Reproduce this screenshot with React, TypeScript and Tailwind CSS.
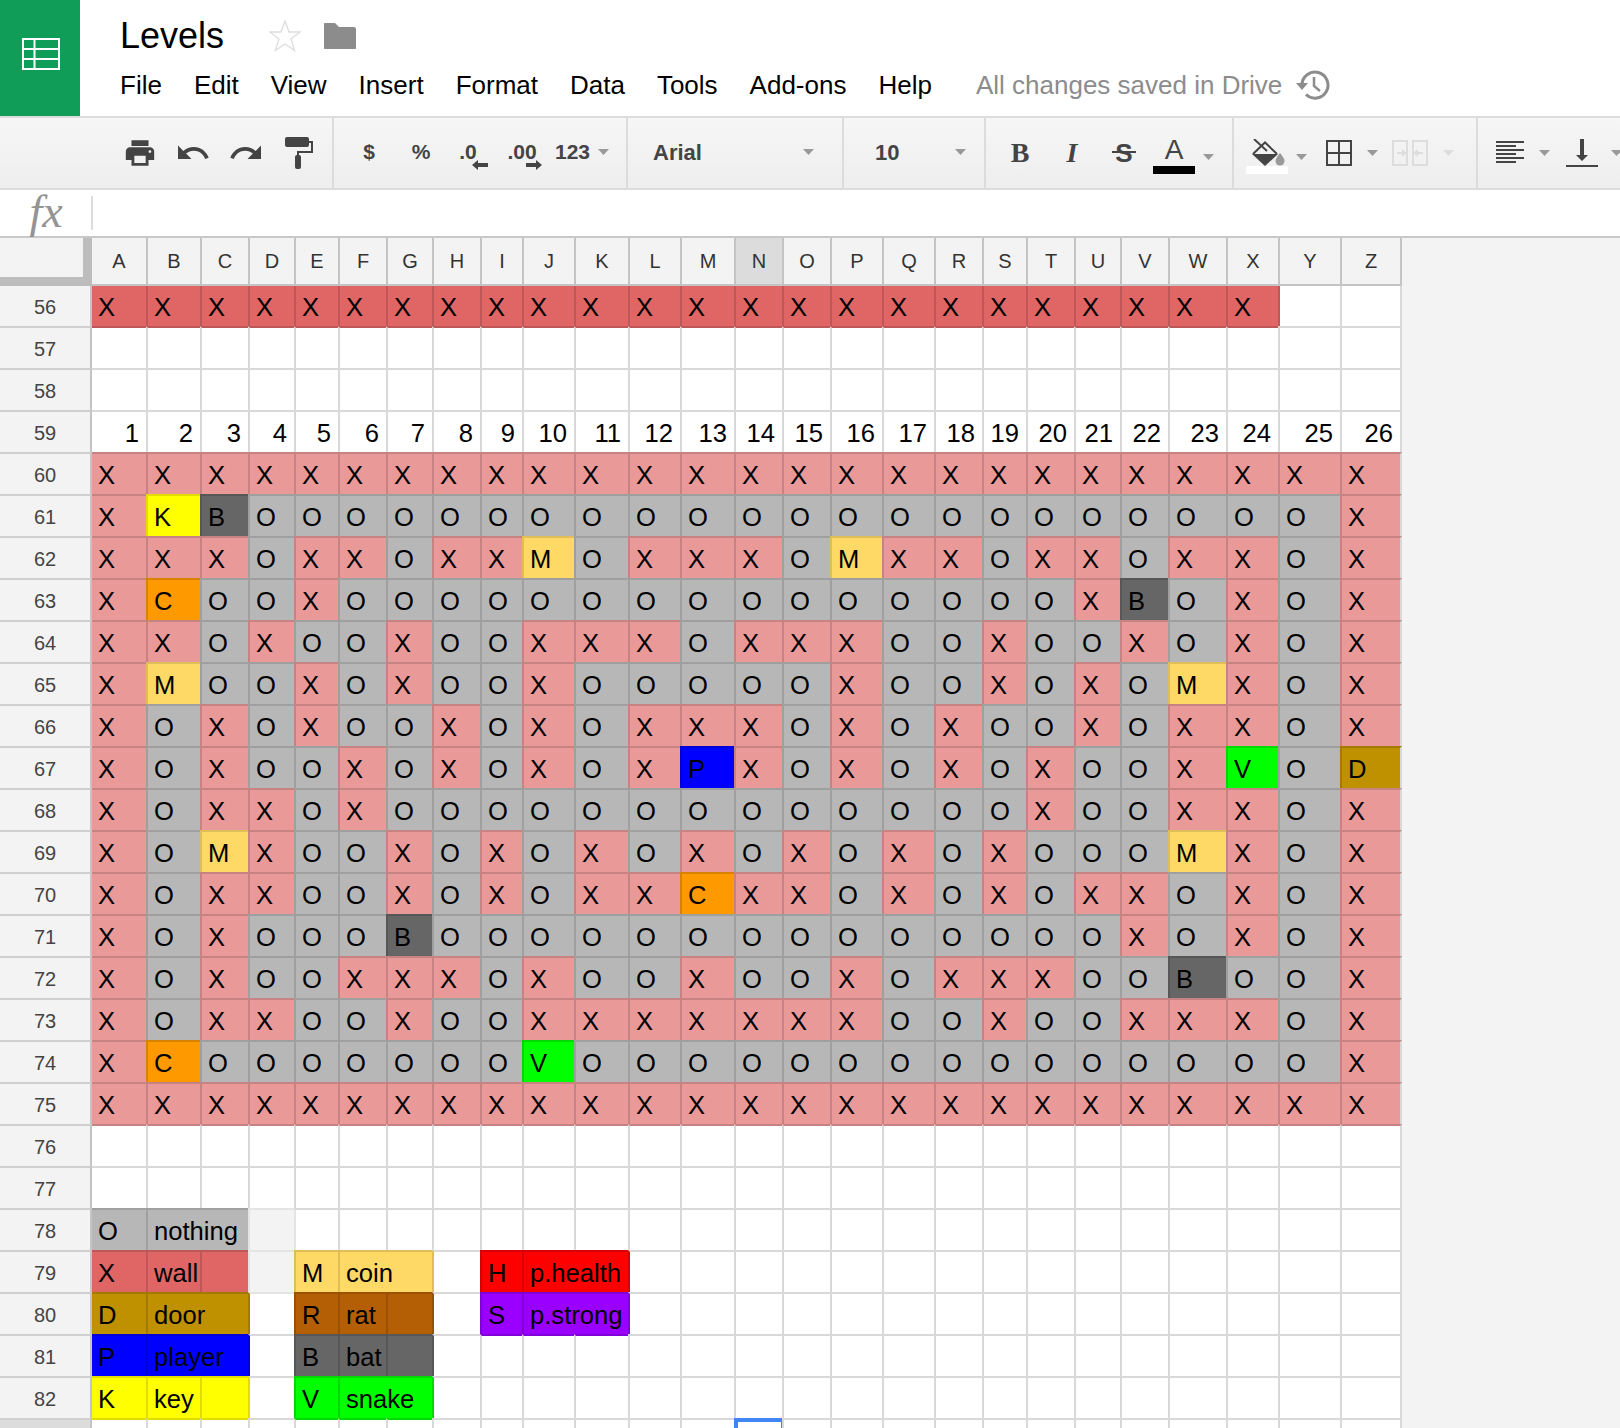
import { Fragment, type ReactNode } from 'react';

type Cell = {
  text?: string;
  fill?: string;
  span?: number;
};

type Tone = {
  bg: string;
  left: string;
  top: string;
};

const columns = 'ABCDEFGHIJKLMNOPQRSTUVWXYZ'.split('');

const palette: Record<string, Tone> = {
  X: { bg: 'bg-[#ea9999]', left: 'border-l-[#c78282]', top: 'border-t-[#c78282]' },
  O: { bg: 'bg-[#b7b7b7]', left: 'border-l-[#9f9f9f]', top: 'border-t-[#9f9f9f]' },
  K: { bg: 'bg-[#ffff00]', left: 'border-l-[#e3dc00]', top: 'border-t-[#e3dc00]' },
  B: { bg: 'bg-[#666666]', left: 'border-l-[#575757]', top: 'border-t-[#575757]' },
  C: { bg: 'bg-[#ff9900]', left: 'border-l-[#d98200]', top: 'border-t-[#d98200]' },
  M: { bg: 'bg-[#ffd966]', left: 'border-l-[#dfbd59]', top: 'border-t-[#dfbd59]' },
  P: { bg: 'bg-[#0000ff]', left: 'border-l-[#0000d9]', top: 'border-t-[#0000d9]' },
  V: { bg: 'bg-[#00ff00]', left: 'border-l-[#00d900]', top: 'border-t-[#00d900]' },
  D: { bg: 'bg-[#bf9000]', left: 'border-l-[#a27a00]', top: 'border-t-[#a27a00]' },
  wall: { bg: 'bg-[#e06666]', left: 'border-l-[#be5757]', top: 'border-t-[#be5757]' },
  rat: { bg: 'bg-[#b45f06]', left: 'border-l-[#995105]', top: 'border-t-[#995105]' },
  red: { bg: 'bg-[#ff0000]', left: 'border-l-[#d90000]', top: 'border-t-[#d90000]' },
  purple: { bg: 'bg-[#9900ff]', left: 'border-l-[#8200d9]', top: 'border-t-[#8200d9]' },
  pale: { bg: 'bg-[#f3f3f3]', left: 'border-l-[#e4e4e4]', top: 'border-t-[#e4e4e4]' },
};

const level: Record<number, string> = {
  60: 'XXXXXXXXXXXXXXXXXXXXXXXXXX',
  61: 'XKBOOOOOOOOOOOOOOOOOOOOOOX',
  62: 'XXXOXXOXXMOXXXOMXXOXXOXXOX',
  63: 'XCOOXOOOOOOOOOOOOOOOXBOXOX',
  64: 'XXOXOOXOOXXXOXXXOOXOOXOXOX',
  65: 'XMOOXOXOOXOOOOOXOOXOXOMXOX',
  66: 'XOXOXOOXOXOXXXOXOXOOXOXXOX',
  67: 'XOXOOXOXOXOXPXOXOXOXOOXVOD',
  68: 'XOXXOXOOOOOOOOOOOOOXOOXXOX',
  69: 'XOMXOOXOXOXOXOXOXOXOOOMXOX',
  70: 'XOXXOOXOXOXXCXXOXOXOXXOXOX',
  71: 'XOXOOOBOOOOOOOOOOOOOOXOXOX',
  72: 'XOXOOXXXOXOOXOOXOXXXOOBOOX',
  73: 'XOXXOOXOOXXXXXXXOOXOOXXXOX',
  74: 'XCOOOOOOOVOOOOOOOOOOOOOOOX',
  75: 'XXXXXXXXXXXXXXXXXXXXXXXXXX',
};

const legend: Record<number, Cell[]> = {
  78: [{ text: 'O', fill: 'O' }, { text: 'nothing', fill: 'O', span: 2 }, { fill: 'pale' }],
  79: [
    { text: 'X', fill: 'wall' },
    { text: 'wall', fill: 'wall' },
    { fill: 'wall' },
    { fill: 'pale' },
    { text: 'M', fill: 'M' },
    { text: 'coin', fill: 'M', span: 2 },
    {},
    { text: 'H', fill: 'red' },
    { text: 'p.health', fill: 'red', span: 2 },
  ],
  80: [
    { text: 'D', fill: 'D' },
    { text: 'door', fill: 'D', span: 2 },
    {},
    { text: 'R', fill: 'rat' },
    { text: 'rat', fill: 'rat' },
    { fill: 'rat' },
    {},
    { text: 'S', fill: 'purple' },
    { text: 'p.strong', fill: 'purple', span: 2 },
  ],
  81: [
    { text: 'P', fill: 'P' },
    { text: 'player', fill: 'P', span: 2 },
    {},
    { text: 'B', fill: 'B' },
    { text: 'bat', fill: 'B' },
    { fill: 'B' },
  ],
  82: [
    { text: 'K', fill: 'K' },
    { text: 'key', fill: 'K' },
    { fill: 'K' },
    {},
    { text: 'V', fill: 'V' },
    { text: 'snake', fill: 'V', span: 2 },
  ],
};

function cellsFor(n: number): Cell[] {
  if (n === 56) return columns.map((_, i) => (i < 24 ? { text: 'X', fill: 'wall' } : {}));
  if (n === 59) return columns.map((_, i) => ({ text: String(i + 1) }));
  if (level[n]) return level[n].split('').map((c) => ({ text: c, fill: c }));
  const spec = legend[n] ?? [];
  const used = spec.reduce((total, c) => total + (c.span ?? 1), 0);
  return [...spec, ...Array.from({ length: 26 - used }, () => ({}))];
}

// fill key per column, with merged cells written out
function fillsFor(n: number): (string | undefined)[] {
  const out: (string | undefined)[] = [];
  cellsFor(n).forEach((c) => {
    for (let i = 0; i < (c.span ?? 1); i++) out.push(c.fill);
  });
  return out;
}

function Caret({ light = false, low = false }: { light?: boolean; low?: boolean }) {
  return (
    <svg width="11" height="6" viewBox="0 0 11 6" className={low ? 'mt-[8px] shrink-0' : 'shrink-0'}>
      <path d="M0 0h11L5.5 6z" fill={light ? '#dddddd' : '#999999'} />
    </svg>
  );
}

function ToolButton({ children }: { children: ReactNode }) {
  return <div className="flex h-[40px] w-[52px] shrink-0 items-center justify-center">{children}</div>;
}

function Icon({ path, size = 34 }: { path: string; size?: number }) {
  return (
    <svg width={size} height={size} viewBox="0 0 24 24" fill="#444444">
      <path d={path} />
    </svg>
  );
}

function Toolbar() {
  return (
    <div className="flex h-[74px] border-y-2 border-[#dcdcdc] bg-linear-to-b from-[#f6f6f6] to-[#eeeeee] text-[21px] font-bold text-[#444444]">
      <div className="flex w-[334px] shrink-0 items-center gap-px border-r-2 border-[#dcdcdc] pl-[114px]">
        <ToolButton>
          <Icon path="M19 8H5c-1.66 0-3 1.34-3 3v6h4v4h12v-4h4v-6c0-1.66-1.34-3-3-3zm-3 11H8v-5h8v5zm3-7c-.55 0-1-.45-1-1s.45-1 1-1 1 .45 1 1-.45 1-1 1zm-1-9H6v4h12V3z" />
        </ToolButton>
        <ToolButton>
          <Icon size={36} path="M12.5 8c-2.65 0-5.05.99-6.9 2.6L2 7v9h9l-3.62-3.62c1.39-1.16 3.16-1.88 5.12-1.88 3.54 0 6.55 2.31 7.6 5.5l2.37-.78C21.08 11.03 17.15 8 12.5 8z" />
        </ToolButton>
        <ToolButton>
          <Icon size={36} path="M18.4 10.6C16.55 8.99 14.15 8 11.5 8c-4.65 0-8.58 3.03-9.96 7.22L3.9 16c1.05-3.19 4.05-5.5 7.6-5.5 1.95 0 3.73.72 5.12 1.88L13 16h9V7l-3.6 3.6z" />
        </ToolButton>
        <ToolButton>
          <svg width="28" height="32" viewBox="0 0 28 32" fill="none">
            <rect x="0" y="0" width="24" height="10" rx="2" fill="#444444" />
            <path d="M24 5h3v10H13v5" stroke="#444444" strokeWidth="2" />
            <rect x="10" y="18" width="6" height="14" rx="2" fill="#444444" />
          </svg>
        </ToolButton>
      </div>

      <div className="flex w-[294px] shrink-0 items-center border-r-2 border-[#dcdcdc] pb-[2px] pl-[9px]">
        <ToolButton>$</ToolButton>
        <ToolButton>%</ToolButton>
        <ToolButton>
          <div className="relative mr-[10px]">
            .0
            <svg width="16" height="10" viewBox="0 0 16 10" className="absolute top-[24px] left-[13px]">
              <path d="M0 5l6-5v3h10v4H6v3z" fill="#444444" />
            </svg>
          </div>
        </ToolButton>
        <ToolButton>
          <div className="relative mr-[6px]">
            .00
            <svg width="16" height="10" viewBox="0 0 16 10" className="absolute top-[24px] left-[19px]">
              <path d="M16 5l-6-5v3H0v4h10v3z" fill="#444444" />
            </svg>
          </div>
        </ToolButton>
        <span className="ml-[4px]">123</span>
        <div className="ml-[8px]">
          <Caret />
        </div>
      </div>

      <div className="flex w-[216px] shrink-0 items-center justify-between border-r-2 border-[#dcdcdc] pr-[28px] pb-[2px] pl-[25px] text-[22px]">
        <span>Arial</span>
        <Caret />
      </div>

      <div className="flex w-[142px] shrink-0 items-center justify-between border-r-2 border-[#dcdcdc] pr-[18px] pb-[2px] pl-[31px] text-[22px]">
        <span>10</span>
        <Caret />
      </div>

      <div className="flex w-[248px] shrink-0 items-center border-r-2 border-[#dcdcdc] pl-[8px]">
        <ToolButton>
          <span className="font-['Liberation_Serif',serif] text-[28px]">B</span>
        </ToolButton>
        <ToolButton>
          <span className="font-['Liberation_Serif',serif] text-[28px] italic">I</span>
        </ToolButton>
        <ToolButton>
          <span className="relative font-['Liberation_Sans',sans-serif] text-[26px]">
            S
            <span className="absolute top-[17px] -left-[3px] h-[2px] w-[24px] bg-[#444444]" />
          </span>
        </ToolButton>
        <div className="mt-[6px] flex w-[48px] shrink-0 flex-col items-center">
          <span className="h-[28px] text-[28px] leading-[24px] font-normal">A</span>
          <span className="h-[8px] w-[42px] bg-black" />
        </div>
        <div className="ml-[5px]">
          <Caret low />
        </div>
      </div>

      <div className="flex w-[244px] shrink-0 items-center border-r-2 border-[#dcdcdc] pl-[12px]">
        <div className="flex w-[42px] shrink-0 flex-col items-start pt-[6px]">
          <svg width="33" height="27" viewBox="0 0 33 27" fill="none" className="ml-[6px]">
            <path d="M1 15L13 3.500 25 15" stroke="#444444" strokeWidth="2" />
            <path d="M0 15h26L13 27z" fill="#444444" />
            <path d="M2 0l13 12" stroke="#444444" strokeWidth="2" />
            <path d="M28 14s-4.500 5-4.500 8a4.500 4.500 0 0 0 9 0c0-3-4.500-8-4.500-8z" fill="#999999" />
          </svg>
          <span className="h-[8px] w-[42px] bg-white" />
        </div>
        <div className="ml-[8px]">
          <Caret low />
        </div>
        <svg width="26" height="26" viewBox="0 0 26 26" fill="none" stroke="#444444" strokeWidth="2" className="ml-[19px] shrink-0">
          <path d="M1 1h24v24H1zM13 1v24M1 13h24" />
        </svg>
        <div className="ml-[15px]">
          <Caret />
        </div>
        <svg width="36" height="26" viewBox="0 0 36 26" fill="none" stroke="#dddddd" strokeWidth="2" className="ml-[14px] shrink-0">
          <path d="M15 1H1v24h14zM21 1h14v24H21z" />
          <path d="M5 13h8M31 13h-8" />
          <path d="M10 9l5 4-5 4zM26 9l-5 4 5 4z" fill="#dddddd" stroke="none" />
        </svg>
        <div className="ml-[15px]">
          <Caret light />
        </div>
      </div>

      <div className="flex min-w-0 flex-1 items-center pl-[18px]">
        <svg width="28" height="24" viewBox="0 0 28 24" fill="#444444" className="shrink-0">
          <path d="M0 0h28v2H0zM0 4h20v2H0zM0 8h28v2H0zM0 12h20v2H0zM0 16h28v2H0zM0 20h20v2H0z" />
        </svg>
        <div className="ml-[15px]">
          <Caret />
        </div>
        <svg width="32" height="28" viewBox="0 0 32 28" fill="#444444" className="ml-[16px] shrink-0">
          <path d="M14 0h4v16h4l-6 6-6-6h4zM0 26h32v2H0z" />
        </svg>
        <div className="ml-[13px]">
          <Caret />
        </div>
      </div>
    </div>
  );
}

function Header() {
  return (
    <div className="flex h-[116px]">
      <div className="flex w-[80px] shrink-0 items-center justify-center bg-[#0f9d58]">
        <svg width="38" height="32" viewBox="0 0 38 32" fill="none" stroke="white" strokeWidth="2" className="mb-[8px] ml-[2px]">
          <path d="M1 1h36v30H1zM12.500 1v30M1 11h36M1 21h36" />
        </svg>
      </div>
      <div className="flex flex-col pl-[40px]">
        <div className="mt-[14px] flex h-[44px] items-center">
          <span className="text-[36px] text-black">Levels</span>
          <svg width="32" height="32" viewBox="0 0 32 32" fill="none" stroke="#dddddd" strokeWidth="1.3" className="ml-[45px]">
            <path d="M16 1l4 11h11l-9 7 3.500 11.500L16 24l-9.500 6.500L10 19l-9-7h11z" />
          </svg>
          <svg width="32" height="26" viewBox="0 0 32 26" fill="#8c8c8c" className="ml-[23px]">
            <path d="M1 0h10l4 4h15c1 0 2 1 2 2v19c0 .6-.4 1-1 1H1c-.6 0-1-.4-1-1V1c0-.6.4-1 1-1z" />
          </svg>
        </div>
        <div className="mt-[9px] flex h-[36px] items-center gap-[32px] text-[26px] text-black">
          {['File', 'Edit', 'View', 'Insert', 'Format', 'Data', 'Tools', 'Add-ons', 'Help'].map((item) => (
            <span key={item}>{item}</span>
          ))}
          <div className="ml-[12px] flex items-center gap-[14px] whitespace-nowrap text-[#8c8c8c]">
            <span>All changes saved in Drive</span>
            <svg width="34" height="32" viewBox="0 0 34 32" fill="none" stroke="#8c8c8c">
              <path d="M6 16a13 13 0 1 1 4 9.500" strokeWidth="3" />
              <path d="M0 14h12l-6 7z" fill="#8c8c8c" stroke="none" />
              <path d="M18 8v9l6 5" strokeWidth="2.500" />
            </svg>
          </div>
        </div>
      </div>
    </div>
  );
}

function RowHead({ n }: { n: number }) {
  return (
    <div
      className={`flex items-center justify-center border-r-2 border-r-[#c4c4c4] pt-[2px] text-[20px] text-[#444444] ${
        n === 56 ? '' : 'border-t-2 border-t-[#cfcfcf]'
      } ${n === 83 ? 'bg-[#dcdcdc]' : 'bg-[#f3f3f3]'}`}
    >
      {n === 83 ? '' : n}
    </div>
  );
}

function SheetRow({ n }: { n: number }) {
  const own = fillsFor(n);
  const above = fillsFor(n - 1);
  let col = 0;
  return (
    <>
      {cellsFor(n).map((cell, i) => {
        const at = col;
        col += cell.span ?? 1;
        const tone = cell.fill ? palette[cell.fill] : undefined;
        const leftTone = tone ?? (at > 0 && own[at - 1] ? palette[own[at - 1] as string] : undefined);
        const topFill = n === 56 ? undefined : own[at] ?? above[at];
        const topTone = topFill ? palette[topFill] : undefined;
        const lines = [
          at > 0 ? `border-l-2 ${leftTone?.left ?? 'border-l-[#d9d9d9]'}` : '',
          n === 56 ? '' : `border-t-2 ${topTone?.top ?? 'border-t-[#d9d9d9]'}`,
          at + (cell.span ?? 1) === 26 ? 'border-r-2 border-r-[#d9d9d9]' : '',
        ].join(' ');
        return (
          <div
            key={i}
            className={`relative flex items-center pt-[2px] text-[25.6px] whitespace-nowrap text-black ${
              n === 59 ? 'justify-end pr-[7px]' : 'pl-[6px]'
            } ${tone?.bg ?? 'bg-white'} ${lines} ${cell.span === 2 ? 'col-span-2' : ''}`}
          >
            {cell.text}
            {n === 83 && at === 13 && (
              <div className="absolute -top-[2px] -left-[2px] h-[40px] w-[51px] border-4 border-[#4285f4]" />
            )}
          </div>
        );
      })}
    </>
  );
}

function Sheet() {
  const rows = Array.from({ length: 28 }, (_, i) => 56 + i);
  return (
    <div className="grid w-[1402px] grid-cols-[92px_54px_54px_48px_46px_44px_48px_46px_48px_42px_52px_54px_52px_54px_48px_48px_52px_52px_48px_44px_48px_46px_48px_58px_52px_62px_62px] grid-rows-[48px_40px] auto-rows-[42px]">
      <div className="border-r-[9px] border-b-[9px] border-[#bdbdbd] bg-[#f3f3f3]" />
      {columns.map((c, i) => (
        <div
          key={c}
          className={`flex items-center justify-center border-b-2 border-[#c4c4c4] text-[20px] text-[#333333] ${i > 0 ? 'border-l-2' : ''} ${
            i === 25 ? 'border-r-2' : ''
          } ${c === 'N' ? 'bg-[#dcdcdc]' : 'bg-[#f3f3f3]'}`}
        >
          {c}
        </div>
      ))}
      {rows.map((n) => (
        <Fragment key={n}>
          <RowHead n={n} />
          <SheetRow n={n} />
        </Fragment>
      ))}
    </div>
  );
}

export default function App() {
  return (
    <div className="h-[1428px] w-[1620px] overflow-hidden bg-white font-['Liberation_Sans',sans-serif]">
      <Header />
      <Toolbar />
      <div className="flex h-[46px] items-center bg-white">
        <span className="mb-[3px] w-[91px] pl-[1px] text-center font-['Liberation_Serif',serif] text-[46px] leading-none text-[#949494] italic">
          fx
        </span>
        <span className="h-[34px] w-[2px] bg-[#dddddd]" />
      </div>
      <div className="h-[1192px] border-t-2 border-[#c8c8c8] bg-[#f3f3f3]">
        <Sheet />
      </div>
    </div>
  );
}
